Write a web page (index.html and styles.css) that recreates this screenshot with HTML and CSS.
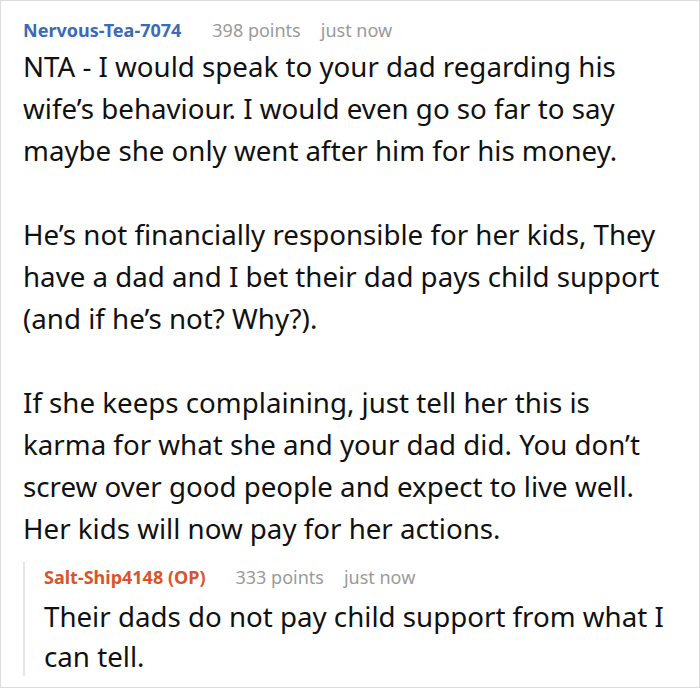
FILE: index.html
```html
<!DOCTYPE html>
<html>
<head>
<meta charset="utf-8">
<link rel="stylesheet" href="styles.css">
</head>
<body>
<div class="frame">
  <div class="meta">
    <span class="user">Nervous-Tea-7074</span>
    <span class="points">398 points</span>
    <span class="time">just now</span>
  </div>
  <div class="body">
    <p>NTA - I would speak to your dad regarding his wife’s behaviour. I would even go so far to say maybe she only went after him for his money.</p>
    <p>He’s not financially responsible for her kids, They have a dad and I bet their dad pays child support (and if he’s not? Why?).</p>
    <p>If she keeps complaining, just tell her this is karma for what she and your dad did. You don’t screw over good people and expect to live well. Her kids will now pay for her actions.</p>
  </div>
  <div class="reply">
    <div class="meta">
      <span class="user op">Salt-Ship4148 (OP)</span>
      <span class="points">333 points</span>
      <span class="time">just now</span>
    </div>
    <p class="reply-text">Their dads do not pay child support from what I can tell.</p>
  </div>
</div>
</body>
</html>
```
FILE: styles.css
```css
html, body {
  margin: 0;
  padding: 0;
  background: #fff;
}
body {
  font-family: "Noto Sans", "Open Sans", sans-serif;
  color: #111;
}
.frame {
  width: 700px;
  height: 688px;
  box-sizing: border-box;
  border: 1px solid #dcdcdc;
  padding: 14px 22px 0 22px;
  overflow: hidden;
}
.meta {
  display: flex;
  align-items: baseline;
  font-size: 18px;
  line-height: 30px;
}
.user {
  font-weight: 700;
  color: #3a6ab8;
  margin-right: 31px;
}
.points, .time {
  color: #9a9a9a;
}
.points {
  margin-right: 20px;
}
.body p {
  margin: 0 0 42px 0;
  font-size: 27.7px;
  line-height: 42px;
}
.body p:last-child {
  margin-bottom: 0;
}
.reply {
  margin-top: 13px;
  border-left: 2px solid #e6e6e6;
  padding-left: 19px;
}
.reply .user.op {
  color: #d9542b;
  margin-right: 30px;
}
.reply-text {
  margin: 4px 0 0 0;
  font-size: 27.7px;
  line-height: 40px;
}
```
